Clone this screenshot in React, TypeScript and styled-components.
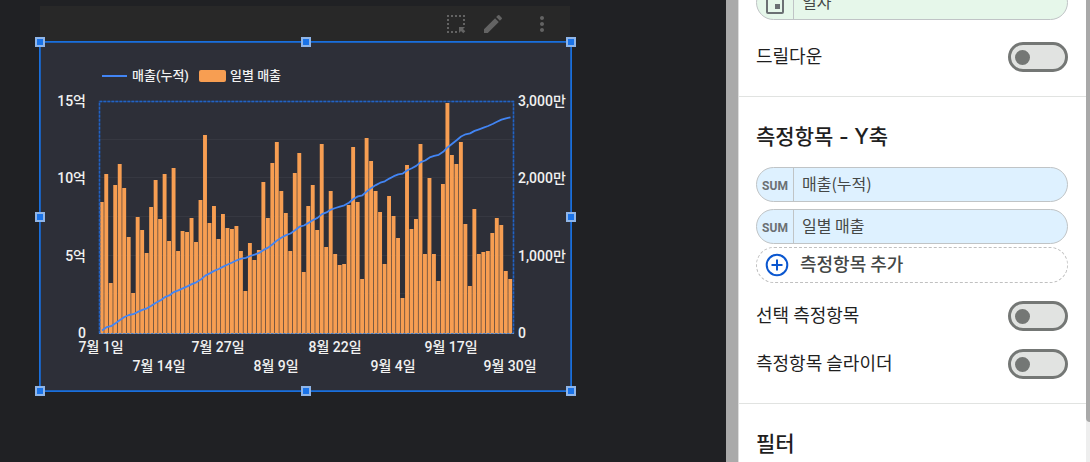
import React from "react";
import styled, { createGlobalStyle } from "styled-components";
import { MdEdit, MdMoreVert } from "react-icons/md";

const GlobalStyle = createGlobalStyle`
  * { box-sizing: border-box; }
  body {
    margin: 0;
    background: #202124;
    font-family: "Noto Sans CJK KR", sans-serif;
    overflow: hidden;
  }
  button { font: inherit; padding: 0; border: 0; background: none; cursor: pointer; }
`;

const Page = styled.div`
  display: flex;
  height: 100vh;
  overflow: hidden;
`;

const Canvas = styled.main`
  flex: 1;
  min-width: 0;
  padding: 6px 0 0 40px;
  background: #202124;
  overflow: hidden;
`;

const Widget = styled.section`
  width: 531px;
`;

const Toolbar = styled.div`
  display: flex;
  align-items: center;
  justify-content: flex-end;
  height: 36px;
  margin-right: 1px;
  padding-right: 16px;
  background: #282828;
`;

const ToolButton = styled.button<{ $gap?: number }>`
  display: flex;
  width: 24px;
  height: 24px;
  margin-left: ${(p) => p.$gap ?? 0}px;
  color: #636363;
`;

const Selection = styled.div`
  position: relative;
  background: #2d2f38;
  outline: 1px solid #1a6fdc;
  box-shadow: inset 0 0 0 1px #1b5fb8;
`;

const ChartSvg = styled.svg`
  display: block;
  width: 100%;
  font-family: Roboto, "Noto Sans CJK KR", sans-serif;
  font-size: 14px;
  font-weight: 500;
  fill: #f1f1f1;
`;

const LegendText = styled.text`
  font-size: 13px;
`;

const Handle = styled.i<{ $x: number; $y: number }>`
  position: absolute;
  left: ${(p) => p.$x}%;
  top: ${(p) => p.$y}%;
  width: 10px;
  height: 10px;
  margin: -5px 0 0 -5px;
  border: 2px solid #8fb5e8;
  background: #1a73e8;
`;

const Gutter = styled.div`
  width: 12px;
  background: #aaaaaa;
`;

const Panel = styled.aside`
  width: 348px;
  border-left: 1px solid #dddddd;
  background: #ffffff;
  color: #1f1f1f;
  overflow: hidden;
`;

const ScrollTrack = styled.div`
  width: 4px;
  background: #eeeeee;
`;

const ScrollThumb = styled.div`
  height: 422px;
  border-radius: 0 0 0 4px;
  background: #a9a9a9;
`;

const Section = styled.section<{ $scrolled?: boolean }>`
  padding: 0 18px 24px 17px;
  margin-top: ${(p) => (p.$scrolled ? -15 : 0)}px;
  border-bottom: 1px solid #e1e3e1;
`;

const Heading = styled.h2`
  margin: 0;
  padding: 25px 0 16px;
  font-family: Inter, "Noto Sans CJK KR", sans-serif;
  font-size: 21px;
  line-height: 29px;
  font-weight: 500;
`;

const ChipList = styled.div`
  display: flex;
  flex-direction: column;
  gap: 7px;
`;

const Chip = styled.button<{ $tone: "green" | "blue" }>`
  display: flex;
  width: 100%;
  height: 35px;
  border: 1px solid #c0c4c6;
  border-radius: 18px;
  overflow: hidden;
  background: ${(p) => (p.$tone === "green" ? "#e6f7ea" : "#def1ff")};
  color: #444746;
  text-align: left;
`;

const ChipType = styled.span`
  display: flex;
  align-items: center;
  justify-content: center;
  width: 37px;
  height: 100%;
  padding-top: 3px;
  border-right: 1px solid #c0c4c6;
  font: 700 12px Roboto, sans-serif;
  color: #6b7073;
`;

const ChipName = styled.span`
  padding-left: 8px;
  font-size: 16px;
  line-height: 30px;
`;

const AddButton = styled.button`
  display: flex;
  align-items: center;
  gap: 11px;
  width: 100%;
  height: 36px;
  margin-top: 3px;
  padding-left: 8px;
  border: 1px dashed #c0c0c0;
  border-radius: 18px;
  color: #444746;
  font-size: 18px;
  line-height: 30px;
  font-weight: 500;
`;

const AddLabel = styled.span`
  padding-bottom: 4px;
`;

const ToggleRow = styled.label<{ $gap: number }>`
  display: flex;
  align-items: flex-start;
  justify-content: space-between;
  height: 30px;
  margin-top: ${(p) => p.$gap}px;
  font-size: 18px;
  line-height: 26px;
`;

const Switch = styled.input`
  appearance: none;
  display: flex;
  align-items: center;
  width: 60px;
  height: 30px;
  margin: 0;
  padding-left: 4px;
  border: 3px solid #747775;
  border-radius: 15px;
  background: #e1e3e1;
  &::before {
    content: "";
    width: 15px;
    height: 15px;
    border-radius: 50%;
    background: #747775;
  }
  &:checked { justify-content: flex-end; padding: 0 4px 0 0; }
`;

// Daily sales for July 1 to September 30; 232 is the top of the right axis.
const DAILY = [
  131, 159, 50, 148, 169, 145, 96, 40, 116, 103, 80, 126, 153, 114, 159, 92, 165, 82, 102, 101,
  115, 91, 133, 198, 110, 127, 94, 119, 105, 104, 107, 82, 42, 90, 73, 83, 151, 115, 170, 191,
  142, 120, 82, 160, 180, 61, 127, 148, 103, 189, 86, 142, 79, 68, 69, 128, 186, 131, 54, 195,
  172, 142, 121, 69, 137, 117, 95, 35, 168, 104, 114, 189, 79, 155, 79, 52, 149, 230, 178, 169,
  191, 109, 47, 124, 79, 81, 82, 100, 115, 108, 62, 54,
];

const LEFT = 60;
const RIGHT = 473;
const TOP = 59;
const BOTTOM = 291;
const STEP = (RIGHT - LEFT) / DAILY.length;
const CENTER = 2;

// The left axis covers fifty times the range of the right one.
const cumulative = DAILY.reduce<number[]>((sums, v) => [...sums, (sums[sums.length - 1] ?? 0) + v], []);
const linePoints = cumulative
  .map((sum, i) => `${(LEFT + i * STEP + CENTER).toFixed(1)},${(BOTTOM - sum / 50).toFixed(1)}`)
  .join(" ");

const ROWS = [
  { left: "15억", right: "3,000만" },
  { left: "10억", right: "2,000만" },
  { left: "5억", right: "1,000만" },
  { left: "0", right: "0" },
];
const DATES = ["7월 1일", "7월 14일", "7월 27일", "8월 9일", "8월 22일", "9월 4일", "9월 17일", "9월 30일"];

function Chart() {
  return (
    <ChartSvg viewBox="0 0 531 349" role="img" aria-label="매출(누적), 일별 매출">
      <path d="M62 34H87" stroke="#4285f4" strokeWidth="2" />
      <LegendText x="92" y="38">매출(누적)</LegendText>
      <rect x="159" y="28" width="27" height="12" rx="2" fill="#f79e52" />
      <LegendText x="190" y="38">일별 매출</LegendText>
      {[1, 2, 3, 4, 5].map((n) => (
        <path key={n} d={`M${LEFT} ${Math.round(TOP + (n * 232) / 6) - 0.5}H${RIGHT}`} stroke="#363841" />
      ))}
      {DAILY.map((v, i) => (
        <rect key={i} x={LEFT - 0.2 + i * STEP} y={BOTTOM - v} width="3.9" height={v} fill="#f79e52" />
      ))}
      <path d="M59.5 291.5V59.5H473.5V291.5" fill="none" stroke="#25457a" strokeWidth="1.6" />
      <path d="M59.5 291.5V59.5H473.5V291.5" fill="none" stroke="#2263c4" strokeWidth="1.4" strokeDasharray="2.5 1.5" />
      <path d="M59 291.5H474" stroke="#b39a86" />
      <path d="M59 291.5H474" stroke="#4b84cf" strokeDasharray="2.5 1.5" />
      <polyline points={linePoints} fill="none" stroke="#4285f4" strokeWidth="1.8" strokeLinejoin="round" />
      {ROWS.map((row, i) => {
        const y = Math.round(TOP + (i * 232) / 3) + 5;
        return (
          <g key={i}>
            <text x="46" y={y} textAnchor="end">{row.left}</text>
            <text x="478" y={y}>{row.right}</text>
          </g>
        );
      })}
      {DATES.map((date, i) => (
        <text key={date} x={Math.round(61 + i * 58.4)} y={i % 2 ? 329 : 310} textAnchor="middle">
          {date}
        </text>
      ))}
    </ChartSvg>
  );
}

const HANDLES = [[0, 0], [50, 0], [100, 0], [0, 50], [100, 50], [0, 100], [50, 100], [100, 100]];

function Toggle({ label, gap }: { label: string; gap: number }) {
  return (
    <ToggleRow $gap={gap}>
      {label}
      <Switch type="checkbox" role="switch" />
    </ToggleRow>
  );
}

export default function App() {
  return (
    <>
      <GlobalStyle />
      <Page>
        <Canvas>
          <Widget>
            <Toolbar>
              <ToolButton aria-label="영역 선택">
                <svg width="24" height="24" viewBox="0 0 24 24" fill="none" stroke="currentColor" strokeWidth="2">
                  <path d="M3 4H21M20 3V15M4 3V21M3 20H15" strokeDasharray="2 2" />
                  <path d="M15 15H21L19 17L21.3 19.3L19.3 21.3L17 19L15 21Z" fill="currentColor" stroke="none" />
                </svg>
              </ToolButton>
              <ToolButton aria-label="수정" $gap={13}><MdEdit size={24} /></ToolButton>
              <ToolButton aria-label="더보기" $gap={25}><MdMoreVert size={24} /></ToolButton>
            </Toolbar>
            <Selection>
              <Chart />
              {HANDLES.map(([x, y]) => <Handle key={`${x}-${y}`} $x={x} $y={y} />)}
            </Selection>
          </Widget>
        </Canvas>
        <Gutter />
        <Panel>
          <Section $scrolled>
            <Chip $tone="green">
              <ChipType>
                <svg width="20" height="22" viewBox="0 0 20 22" fill="none" stroke="#6b7073" strokeWidth="2">
                  <rect x="2" y="3" width="16" height="17" rx="1" />
                  <path d="M2 5H18M5 0V3M15 0V3" />
                  <rect x="10" y="11" width="5" height="5" fill="#6b7073" stroke="none" />
                </svg>
              </ChipType>
              <ChipName>일자</ChipName>
            </Chip>
            <Toggle label="드릴다운" gap={22} />
          </Section>
          <Section>
            <Heading>측정항목 - Y축</Heading>
            <ChipList>
              <Chip $tone="blue"><ChipType>SUM</ChipType><ChipName>매출(누적)</ChipName></Chip>
              <Chip $tone="blue"><ChipType>SUM</ChipType><ChipName>일별 매출</ChipName></Chip>
            </ChipList>
            <AddButton>
              <svg width="24" height="24" viewBox="0 0 24 24" fill="none" stroke="#0b57d0" strokeWidth="2">
                <circle cx="12" cy="12" r="10.3" />
                <path d="M12 6.5V17.5M6.5 12H17.5" />
              </svg>
              <AddLabel>측정항목 추가</AddLabel>
            </AddButton>
            <Toggle label="선택 측정항목" gap={18} />
            <Toggle label="측정항목 슬라이더" gap={18} />
          </Section>
          <Section>
            <Heading>필터</Heading>
          </Section>
        </Panel>
        <ScrollTrack><ScrollThumb /></ScrollTrack>
      </Page>
    </>
  );
}
